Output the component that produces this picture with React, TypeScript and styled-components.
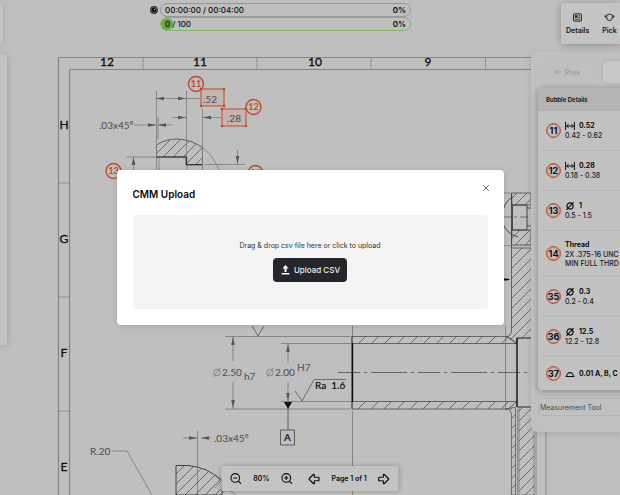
import React from "react";
import styled, { createGlobalStyle } from "styled-components";
import { ArrowBigLeft, ArrowBigRight, ArrowLeft, X, ZoomIn, ZoomOut } from "lucide-react";

const GlobalStyle = createGlobalStyle`
  * { box-sizing: border-box; }
  body { margin: 0; background: #bfbfbf; }
  body, button, input { font-family: Inter, "Liberation Sans", sans-serif; }
  h1, h2, p { margin: 0; }
`;

const ink = "#0c0c0c";
const accent = "#bd4a2c";

const Page = styled.main`
  position: relative;
  height: 100vh;
  overflow: hidden;
  display: flex;
  flex-direction: column;
  background: #bfbfbf;
  color: ${ink};
`;

const Canvas = styled.svg`
  position: absolute;
  inset: 0;
  width: 100%;
  height: 100%;
  text { font-family: Lato, "Open Sans", sans-serif; }
`;

const TopBar = styled.header`
  position: relative;
  display: flex;
  align-items: flex-start;
  gap: 147px;
  padding-top: 3px;
`;

const EdgePanel = styled.div<{ $width: number; $height: number }>`
  flex: none;
  width: ${(p) => p.$width}px;
  height: ${(p) => p.$height}px;
  border-radius: 0 3px 3px 0;
  background: #c3c3c3;
  box-shadow: 0 1px 7px rgba(0, 0, 0, 0.2);
`;

const Progress = styled.section`
  flex: 1;
  margin-right: 3px;
  display: grid;
  grid-template-columns: 8px 1fr;
  column-gap: 2px;
  align-items: center;
`;

const Bar = styled.div<{ $color: string }>`
  position: relative;
  grid-column: 2;
  display: flex;
  align-items: center;
  justify-content: space-between;
  height: 14px;
  padding: 0 4px;
  border: 1px solid ${(p) => p.$color};
  border-radius: 7px;
  font-size: 8px;
  line-height: 12px;
  overflow: hidden;
`;

const Fill = styled.i`
  position: absolute;
  left: 0;
  top: 0;
  width: 12px;
  height: 12px;
  border-radius: 6px;
  background: #6aa544;
`;

const BarText = styled.span<{ $strong?: boolean }>`
  position: relative;
  font-weight: ${(p) => (p.$strong ? 600 : 500)};
`;

const Tools = styled.nav`
  flex: none;
  display: flex;
  gap: 13px;
  width: 59px;
  height: 41px;
  padding: 10px 0 0 5px;
  border-radius: 3px 0 0 3px;
  background: #c4c4c4;
  box-shadow: 0 1px 7px rgba(0, 0, 0, 0.28);
`;

const ToolButton = styled.button`
  flex: none;
  display: flex;
  flex-direction: column;
  align-items: center;
  gap: 3px;
  height: 24px;
  padding: 0;
  border: 0;
  background: none;
  color: #161616;
  font-size: 7px;
  font-weight: 600;
  line-height: 12px;
`;

const Workspace = styled.div`
  position: relative;
  display: flex;
  justify-content: space-between;
  align-items: flex-start;
  padding-top: 8px;
`;

const LeftSlot = styled.div`
  padding-top: 2px;
`;

const SidePanel = styled.aside`
  width: 89px;
  height: 380px;
  padding: 9px 0 0 7px;
  border-radius: 5px 0 0 6px;
  background: #c0c0c0;
  box-shadow: 0 2px 6px rgba(0, 0, 0, 0.12);
  overflow: hidden;
`;

const StepRow = styled.div`
  display: flex;
  gap: 8px;
  padding-left: 7px;
`;

const StepButton = styled.button<{ $raised?: boolean }>`
  flex: none;
  display: flex;
  align-items: center;
  justify-content: center;
  gap: 3px;
  width: 50px;
  height: 22px;
  padding: 0 6px 0 0;
  border: 0;
  border-radius: 5px;
  background: ${(p) => (p.$raised ? "#c7c7c7" : "#c0c0c0")};
  box-shadow: 0 0 3px rgba(0, 0, 0, ${(p) => (p.$raised ? 0.12 : 0.03)});
  color: #919191;
  font-size: 7px;
`;

const Card = styled.section`
  margin-top: 5px;
  width: 100px;
  border-radius: 4px;
  background: #c2c2c2;
  box-shadow: 0 1px 6px rgba(0, 0, 0, 0.32);
  overflow: hidden;
`;

const CardTitle = styled.h2`
  padding: 0 8px;
  background: #b4b4b4;
  font-size: 6px;
  font-weight: 600;
  line-height: 23px;
`;

const List = styled.ul`
  margin: 0;
  padding: 0 0 0 4px;
  list-style: none;
`;

const Item = styled.li<{ $height: number }>`
  display: flex;
  align-items: center;
  gap: 4px;
  height: ${(p) => p.$height}px;
  padding-left: 4px;
  white-space: nowrap;
  & + & { border-top: 1px solid #b8b8b8; }
`;

const Bubble = styled.span`
  flex: none;
  display: grid;
  place-items: center;
  width: 15px;
  height: 15px;
  border: 1px solid ${accent};
  border-radius: 50%;
  box-shadow: inset 0 0 0 1px rgba(189, 74, 44, 0.55);
  font-size: 9px;
  font-weight: 700;
  line-height: 12px;
`;

const ItemTitle = styled.div`
  display: flex;
  align-items: center;
  gap: 4px;
  font-size: 7px;
  font-weight: 700;
  line-height: 10px;
`;

const ItemRange = styled.div`
  font-size: 7px;
  font-weight: 500;
  line-height: 9px;
  color: #1c1c1c;
`;

const ToolField = styled.input`
  display: block;
  width: 100px;
  height: 18px;
  margin-top: 8px;
  padding: 0 0 0 1px;
  border: 1px solid #b6b6b6;
  border-radius: 3px;
  background: #c1c1c1;
  font-size: 7px;
  &::placeholder { color: #4a4a4a; opacity: 1; }
`;

const Pager = styled.div`
  position: absolute;
  left: 50%;
  bottom: 4px;
  transform: translateX(-50%);
  display: flex;
  align-items: center;
  gap: 14px;
  height: 25px;
  padding: 0 8px;
  border-radius: 2px;
  background: #c3c3c3;
  box-shadow: 0 0 5px rgba(0, 0, 0, 0.25);
  font-size: 7px;
  font-weight: 600;
  white-space: nowrap;
`;

const PagerGroup = styled.div<{ $gap: number }>`
  display: flex;
  align-items: center;
  gap: ${(p) => p.$gap}px;
`;

const IconButton = styled.button`
  display: flex;
  padding: 0;
  border: 0;
  background: none;
  color: inherit;
`;

const Overlay = styled.div`
  position: absolute;
  inset: 0;
  display: flex;
  align-items: center;
  justify-content: center;
`;

const Modal = styled.section`
  position: relative;
  width: 100%;
  max-width: 387px;
  margin: 0 16px;
  padding: 16px;
  border-radius: 4px;
  background: #fff;
  box-shadow: 0 1px 6px rgba(0, 0, 0, 0.15);
`;

const ModalTitle = styled.h1`
  margin-bottom: 12px;
  font-size: 10px;
  font-weight: 600;
  line-height: 17px;
`;

const Close = styled(IconButton)`
  position: absolute;
  top: 13px;
  right: 13px;
  color: #444;
`;

const DropZone = styled.div`
  display: flex;
  flex-direction: column;
  align-items: center;
  gap: 6px;
  padding: 25px 0 27px;
  border-radius: 3px;
  background: #f4f4f4;
`;

const Hint = styled.p`
  color: #333;
  font-size: 7px;
  line-height: 12px;
`;

const UploadButton = styled.button`
  display: flex;
  align-items: center;
  gap: 4px;
  height: 24px;
  padding: 0 7px 0 8px;
  border: 0;
  border-radius: 4px;
  background: #25252c;
  color: #efefef;
  font-size: 8px;
  font-weight: 500;
`;

const Clock = () => (
  <svg width="8" height="8" viewBox="0 0 8 8" role="img" aria-label="Time">
    <circle cx="4" cy="4" r="3.9" fill="#2b2b2b" />
    <circle cx="4" cy="4" r="2.9" fill="none" stroke="#8a8a8a" strokeWidth=".4" />
    <circle cx="4" cy="4" r="2.1" fill="#050505" />
    <path d="M4 4 5.7 2.4" stroke="#c4c4c4" strokeWidth=".9" />
  </svg>
);

const DetailsIcon = () => (
  <svg width="9" height="9" viewBox="0 0 9 9" fill="none" stroke="#1c1c1c">
    <rect x=".6" y=".9" width="7.8" height="7.2" rx=".6" />
    <rect x="2.2" y="2.7" width="2" height="1.7" fill="#1c1c1c" strokeWidth=".5" />
    <path d="M5.3 2.8h1.8M5.3 4.4h1.8M2 6.2h5.1" strokeWidth=".8" />
  </svg>
);

const PickIcon = () => (
  <svg width="11" height="9" viewBox="0 0 11 9" fill="none" stroke="#1c1c1c" strokeLinejoin="round">
    <path d="M2.5 2.1Q5.5 0 8.5 2.1L8 6Q7.3 7.6 5.5 7.6T3 6ZM2.6 2.7.6 3.3 2.8 5M8.4 2.7l2 .6L8.2 5" strokeWidth=".9" />
  </svg>
);

const UploadIcon = () => (
  <svg width="9" height="10" viewBox="0 0 9 10" fill="#fff">
    <path d="M4.5 0 7.6 3.4H5.5V7h-2V3.4H1.4ZM.6 8h7.8v1.5H.6Z" />
  </svg>
);

type Kind = "length" | "diameter" | "profile" | "none";

const KindIcon = ({ kind }: { kind: Kind }) => {
  if (kind === "none") return null;
  return (
    <svg width="10" height="8" viewBox="0 0 10 8" fill="none" stroke={ink} strokeWidth="1.2">
      {kind === "length" && <path d="M.6 0v8M9.4 0v8M1.5 4h7M3.5 2.300 1.6 4l1.9 1.700M6.500 2.300 8.400 4 6.500 5.700" strokeWidth="1" />}
      {kind === "diameter" && <><circle cx="5" cy="4" r="3.100" /><path d="M1.4 7.800 8.600.2" /></>}
      {kind === "profile" && <path d="M.6 6.500h8.800M1.600 6.500a3.400 3.800 0 0 1 6.800 0" />}
    </svg>
  );
};

const items: { no: number; kind: Kind; title: string; lines: string[]; height: number }[] = [
  { no: 11, kind: "length", title: "0.52", lines: ["0.42 - 0.62"], height: 39 },
  { no: 12, kind: "length", title: "0.28", lines: ["0.18 - 0.38"], height: 40 },
  { no: 13, kind: "diameter", title: "1", lines: ["0.5 - 1.5"], height: 40 },
  { no: 14, kind: "none", title: "Thread", lines: ["2X .375-16 UNC", "MIN FULL THRD"], height: 46 },
  { no: 35, kind: "diameter", title: "0.3", lines: ["0.2 - 0.4"], height: 40 },
  { no: 36, kind: "diameter", title: "12.5", lines: ["12.2 - 12.8"], height: 40 },
  { no: 37, kind: "profile", title: "0.01 A, B, C", lines: [], height: 34 },
];

type ArrowProps = { x: number; y: number; dir: "l" | "r" | "u" | "d" };
const Arrow = ({ x, y, dir }: ArrowProps) => {
  const angle = { r: 0, d: 90, l: 180, u: 270 }[dir];
  return <path d="M0 0-8-1.8v3.6Z" fill="#555" transform={`translate(${x} ${y}) rotate(${angle})`} />;
};

const Balloon = ({ x, y, n }: { x: number; y: number; n: number }) => (
  <g>
    <circle cx={x} cy={y} r="7.5" fill="none" stroke={accent} strokeWidth="1.4" />
    <text x={x} y={y + 3} textAnchor="middle" fontSize="9" fontWeight="700" fill={accent}>{n}</text>
  </g>
);

const Selection = ({ x, y, w, h }: { x: number; y: number; w: number; h: number }) => (
  <g fill={accent}>
    <rect x={x} y={y} width={w} height={h} fill="#c9b0aa" fillOpacity=".75" stroke={accent} />
    {[[x, y], [x + w, y], [x, y + h], [x + w, y + h]].map(([cx, cy]) => (
      <circle key={`${cx}-${cy}`} cx={cx} cy={cy} r="1.3" />
    ))}
  </g>
);

const Drawing = () => (
  <Canvas viewBox="0 0 620 495" preserveAspectRatio="xMinYMin slice" role="img" aria-label="Part drawing">
    <defs>
      <pattern id="hatch" width="10" height="10" patternUnits="userSpaceOnUse">
        <path d="M-1 11 11-1M-1 1 1-1M9 11 11 9" stroke="#555" strokeWidth=".8" />
      </pattern>
      <pattern id="hatchWide" width="13" height="13" patternUnits="userSpaceOnUse">
        <path d="M-1 14 14-1M-1 1 1-1M12 14 14 12" stroke="#555" strokeWidth=".8" />
      </pattern>
    </defs>

    <g fill="none" stroke="#858585">
      <path d="M531 57.5H58.5V495M531 69.5H69.5V495" strokeWidth="1.2" />
      <path d="M143 58v11M257 58v11M371 58v11M485.5 58v11M59 183h10M59 297h10M59 411h10" strokeWidth=".8" />
    </g>
    <g fontSize="12" fill={ink} stroke={ink} strokeWidth=".3" textAnchor="middle">
      <text x="107" y="66">12</text>
      <text x="200" y="66">11</text>
      <text x="315" y="66">10</text>
      <text x="428" y="66">9</text>
      <text x="64" y="129">H</text>
      <text x="64" y="243">G</text>
      <text x="64" y="357">F</text>
      <text x="64" y="471">E</text>
    </g>

    <path d="M156.5 157V145Q165 139 178 139 192 140 202.5 147.5V165H186V157Z" fill="url(#hatch)" stroke="#555" strokeWidth=".9" />
    <g fill="none" stroke="#7c7c7c" strokeWidth=".8">
      <path d="M156.5 91v80M186.5 91v66M202.5 109v62M158 117v22M202.5 147.5Q214 157 219.5 171M126 157h31M133.5 157v14M187 165v6M159 157v14M205 164.5h40M237.5 150v14" />
      <path d="M156 98.5h44M172 117.5h14M203 117.5h18M134 125h23M158 125h14" />
    </g>
    <path d="M156.500 157H186.500V164.500H202.500" fill="none" stroke="#333" strokeWidth="1.2" />
    <Arrow x={156} y={98.5} dir="l" /><Arrow x={186} y={98.5} dir="r" />
    <Arrow x={186} y={117.5} dir="r" /><Arrow x={203} y={117.5} dir="l" />
    <Arrow x={156} y={125} dir="r" /><Arrow x={158} y={125} dir="l" />
    <Arrow x={133.5} y={157} dir="u" /><Arrow x={237.5} y={164} dir="d" />
    <Selection x={201} y={89} w={23} h={17} />
    <Selection x={222} y={109} w={24} h={17} />
    <g fontSize="10" fill="#555" stroke="#555" strokeWidth=".1">
      <text x="203" y="103">.52</text>
      <text x="227" y="122">.28</text>
      <text x="99" y="129">.03x45°</text>
      <text x="214" y="442">.03x45°</text>
      <text x="90" y="455">R.20</text>
      <text x="222" y="376">2.50</text>
      <text x="244" y="380">h7</text>
      <text x="275" y="376">2.00</text>
      <text x="297" y="371">H7</text>
      <g fill={ink} stroke={ink} strokeWidth=".2">
        <text x="315" y="389" xmlSpace="preserve">Ra  1.6</text>
        <text x="284" y="441">A</text>
      </g>
    </g>
    <Balloon x={196} y={84} n={11} />
    <Balloon x={253.5} y={107} n={12} />
    <Balloon x={113.5} y={171} n={13} />
    <Balloon x={255.5} y={173} n={14} />

    <g fill="none" stroke="#777" strokeWidth=".8">
      <path d="M225 336.5h125M225 409h125M233 337v24M233 382v27M281 343.5h70M281 401.5h70M288 344v19M288 382v20" />
      <circle cx="217" cy="372.5" r="3.3" /><path d="m213.5 377 7-9" />
      <circle cx="270" cy="372.5" r="3.3" /><path d="m266.5 377 7-9" />
      <path d="M252 326l6 10 6-10M295 391l7 10 12-21.5h32" stroke="#555" />
      <path d="M288 409v21M280.5 430h14v15h-14Z" stroke="#444" />
      <path d="M352.5 326v10M352.5 411v84M505.5 326v84M197.5 431v64M112 451h15l25 44" />
      <path d="M183 438h14M201 438h10M215 475l7 5-7 8M222 493q6-6 14 2" />
    </g>
    <path d="M284 402h8l-4 7Z" fill={ink} />
    <Arrow x={233} y={337} dir="u" /><Arrow x={233} y={408} dir="d" />
    <Arrow x={288} y={344} dir="u" /><Arrow x={288} y={401} dir="d" />
    <Arrow x={197} y={438} dir="r" /><Arrow x={201} y={438} dir="l" />
    <path d="M176 495V465.5H188Q208 467 222 481V495Z" fill="url(#hatch)" stroke="#444" />

    <g stroke="#4c4c4c" strokeWidth=".8">
      <path d="M352 336.5H508L517 343.5H352Z" fill="url(#hatchWide)" />
      <path d="M511.5 193H531V205H512Z" fill="url(#hatch)" />
      <path d="M512 230H531V245H511.5Z" fill="url(#hatch)" />
      <path d="M531 248H511.5V330Q511.5 336.500 506 336.500L517 343.500V338H531" fill="url(#hatch)" />
      <path d="M352 401.5H517L508 409H352Z" fill="url(#hatchWide)" />
      <path d="M506 409Q511.5 409 511.5 415V495H515.5V407Z" fill="url(#hatch)" strokeWidth=".7" />
      <path d="M519 407H534V495H519Z" fill="url(#hatch)" strokeWidth=".5" />
    </g>
    <g fill="none" stroke="#3c3c3c" strokeWidth=".9">
      <path d="M512.5 205h14.5v25h-14.5ZM527 208h4M527 226h4M511.5 193v55M503 210Q506 200 513 197M503 224q4 10 15 13" />
      <path d="M352 336v73M517 338h14M517 407h14" />
      <path d="M352.5 343v59M517 338v69" stroke={ink} strokeWidth="1.4" />
      <path d="M338 372.5H531" strokeDasharray="22 4 3 4 36 4 3 4" strokeWidth=".7" />
      <path d="M503 217h28" strokeDasharray="8 3 3 3" strokeWidth=".6" />
      <path d="M503 245.5h28M503 193h8" stroke="#858585" />
      <path d="M536 431v64M546 431v64M517.5 409v86" stroke="#777" strokeWidth=".7" />
    </g>
    <path d="M503 278.500h4l3 1-3 1h-4Z" fill={ink} />
  </Canvas>
);

export default function App() {
  return (
    <Page>
      <GlobalStyle />
      <Drawing />
      <TopBar>
        <EdgePanel $width={3} $height={41} />
        <Progress>
          <Clock />
          <Bar $color="#969696">
            <BarText>00:00:00 / 00:04:00</BarText>
            <BarText $strong>0%</BarText>
          </Bar>
          <Bar $color="#82b768">
            <Fill />
            <BarText>0 / 100</BarText>
            <BarText $strong>0%</BarText>
          </Bar>
        </Progress>
        <Tools>
          <ToolButton type="button"><DetailsIcon />Details</ToolButton>
          <ToolButton type="button"><PickIcon />Pick</ToolButton>
        </Tools>
      </TopBar>
      <Workspace>
        <LeftSlot><EdgePanel $width={7} $height={291} /></LeftSlot>
        <SidePanel>
          <StepRow>
            <StepButton type="button"><ArrowLeft size={8} />Prev</StepButton>
            <StepButton type="button" $raised aria-label="Forward" />
          </StepRow>
          <Card>
            <CardTitle>Bubble Details</CardTitle>
            <List>
              {items.map((item) => (
                <Item key={item.no} $height={item.height}>
                  <Bubble>{item.no}</Bubble>
                  <div>
                    <ItemTitle><KindIcon kind={item.kind} />{item.title}</ItemTitle>
                    {item.lines.map((line) => <ItemRange key={line}>{line}</ItemRange>)}
                  </div>
                </Item>
              ))}
            </List>
          </Card>
          <ToolField aria-label="Measurement Tool" placeholder="Measurement Tool" />
        </SidePanel>
      </Workspace>
      <Pager>
        <PagerGroup $gap={11}>
          <IconButton type="button" aria-label="Zoom out"><ZoomOut size={13} /></IconButton>
          <span>80%</span>
          <IconButton type="button" aria-label="Zoom in"><ZoomIn size={13} /></IconButton>
        </PagerGroup>
        <PagerGroup $gap={10}>
          <IconButton type="button" aria-label="Previous page"><ArrowBigLeft size={14} /></IconButton>
          <span>Page 1 of 1</span>
          <IconButton type="button" aria-label="Next page"><ArrowBigRight size={14} /></IconButton>
        </PagerGroup>
      </Pager>
      <Overlay>
        <Modal role="dialog" aria-modal="true" aria-labelledby="upload-title">
          <ModalTitle id="upload-title">CMM Upload</ModalTitle>
          <Close type="button" aria-label="Close"><X size={10} strokeWidth={2} /></Close>
          <DropZone>
            <Hint>Drag &amp; drop csv file here or click to upload</Hint>
            <UploadButton type="button"><UploadIcon />Upload CSV</UploadButton>
          </DropZone>
        </Modal>
      </Overlay>
    </Page>
  );
}
